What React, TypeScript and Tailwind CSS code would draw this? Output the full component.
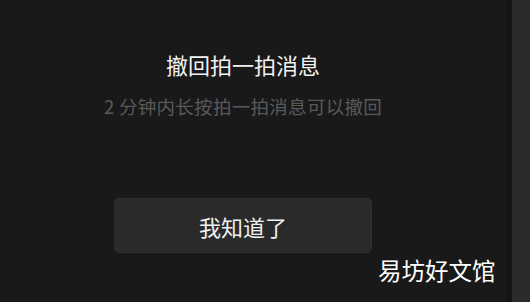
import React from 'react';

export default function App() {
  const font = { fontFamily: '"Noto Sans CJK SC", "Noto Sans", sans-serif' };
  return (
    <div className="relative flex w-[530px] h-[302px] overflow-hidden bg-[#191919]" style={font}>
      {/* Dialog */}
      <div className="w-[506px] h-full">
        <div className="w-[486px] flex flex-col items-center pt-[52px]">
          <h1 className="text-[22px] leading-[24px] text-[#f2f2f2]">撤回拍一拍消息</h1>
          <p className="mt-[20px] text-[18.5px] leading-[20px] text-[#595959] tracking-[0.3px]">
            2 分钟内长按拍一拍消息可以撤回
          </p>
          <button className="mt-[82px] w-[258px] h-[55px] rounded-[5px] bg-[#2a2a2a] border border-[#303030] text-[22px] leading-none text-[#f0f0f0]">
            我知道了
          </button>
        </div>
      </div>
      {/* Right edge */}
      <div className="w-[6px] h-full bg-[#141414]" />
      <div className="flex-1 h-full bg-[#2a2a2a]" />

      {/* Watermark */}
      <div className="absolute left-[378px] top-[256px] text-[23.5px] leading-[28px] text-white">
        易坊好文馆
      </div>
    </div>
  );
}
